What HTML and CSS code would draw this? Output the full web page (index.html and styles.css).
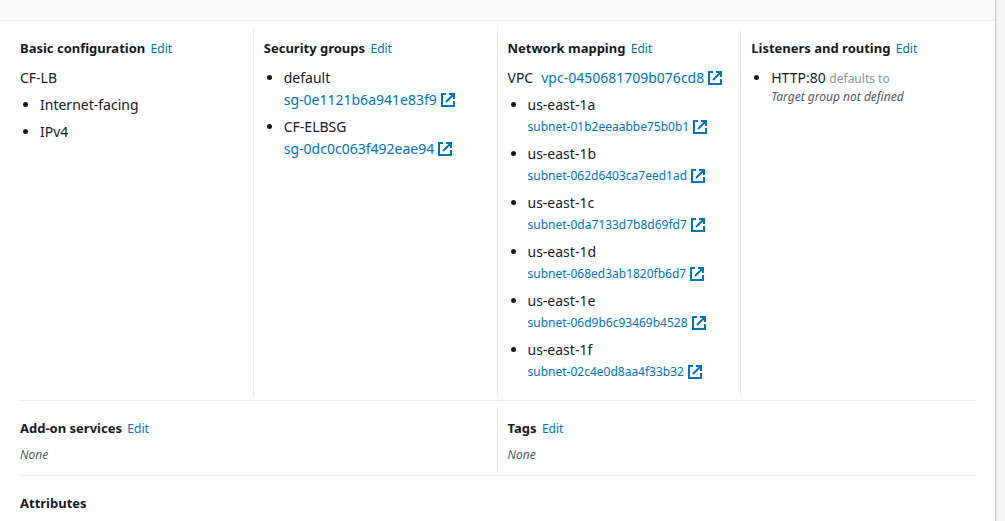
FILE: index.html
```html
<!DOCTYPE html>
<html lang="en">
<head>
<meta charset="utf-8">
<title>Load balancer summary</title>
<link rel="stylesheet" href="styles.css">
</head>
<body>
<svg class="sprite" aria-hidden="true">
  <symbol id="external" viewBox="0 0 16 16">
    <path d="M9 2h5v5M6 10l8-8M14 9v5H2V2h4" fill="none" stroke="currentColor" stroke-width="2"/>
  </symbol>
</svg>
<main class="panel">
  <div class="panel-header"></div>
  <div class="panel-body">
    <div class="row row-four">
      <section class="cell">
        <h2 class="title">Basic configuration <a class="edit" href="#basic">Edit</a></h2>
        <div>CF-LB</div>
        <ul class="list list-spaced">
          <li>Internet-facing</li>
          <li>IPv4</li>
        </ul>
      </section>
      <section class="cell">
        <h2 class="title">Security groups <a class="edit" href="#security">Edit</a></h2>
        <ul class="list">
          <li>default<a class="link" href="#sg1">sg-0e1121b6a941e83f9<svg class="icon"><use href="#external"/></svg></a></li>
          <li>CF-ELBSG<a class="link" href="#sg2">sg-0dc0c063f492eae94<svg class="icon"><use href="#external"/></svg></a></li>
        </ul>
      </section>
      <section class="cell">
        <h2 class="title">Network mapping <a class="edit" href="#network">Edit</a></h2>
        <div class="vpc"><span>VPC</span><a class="link" href="#vpc">vpc-0450681709b076cd8<svg class="icon"><use href="#external"/></svg></a></div>
        <ul class="list list-spaced">
          <li>us-east-1a<a class="link link-small" href="#a">subnet-01b2eeaabbe75b0b1<svg class="icon"><use href="#external"/></svg></a></li>
          <li>us-east-1b<a class="link link-small" href="#b">subnet-062d6403ca7eed1ad<svg class="icon"><use href="#external"/></svg></a></li>
          <li>us-east-1c<a class="link link-small" href="#c">subnet-0da7133d7b8d69fd7<svg class="icon"><use href="#external"/></svg></a></li>
          <li>us-east-1d<a class="link link-small" href="#d">subnet-068ed3ab1820fb6d7<svg class="icon"><use href="#external"/></svg></a></li>
          <li>us-east-1e<a class="link link-small" href="#e">subnet-06d9b6c93469b4528<svg class="icon"><use href="#external"/></svg></a></li>
          <li>us-east-1f<a class="link link-small" href="#f">subnet-02c4e0d8aa4f33b32<svg class="icon"><use href="#external"/></svg></a></li>
        </ul>
      </section>
      <section class="cell">
        <h2 class="title">Listeners and routing <a class="edit" href="#listeners">Edit</a></h2>
        <ul class="list">
          <li>HTTP:80 <span class="muted">defaults to</span><div class="note">Target group not defined</div></li>
        </ul>
      </section>
    </div>
    <div class="row row-two">
      <section class="cell">
        <h2 class="title">Add-on services <a class="edit" href="#addons">Edit</a></h2>
        <div class="note">None</div>
      </section>
      <section class="cell">
        <h2 class="title">Tags <a class="edit" href="#tags">Edit</a></h2>
        <div class="note">None</div>
      </section>
    </div>
    <div class="row">
      <section class="cell">
        <h2 class="title">Attributes</h2>
      </section>
    </div>
  </div>
</main>
</body>
</html>
```
FILE: styles.css
```css
body {
  margin: 0;
  padding-right: 9px;
  background: #f2f3f3;
  color: #16191f;
  font: 14px/22px "Noto Sans", "Open Sans", sans-serif;
  overflow: hidden;
}

.sprite {
  position: absolute;
  width: 0;
  height: 0;
}

.panel {
  min-height: 100vh;
  box-sizing: border-box;
  background: #fff;
  border-right: 1px solid #c4cccc;
}

.panel-header {
  height: 20px;
  background: #fafafa;
  border-bottom: 1px solid #eaeded;
}

.panel-body {
  padding: 0 20px;
}

.row {
  display: grid;
  padding: 6px 0 2px;
  border-bottom: 1px solid #eaeded;
}

.row:last-child {
  border-bottom: 0;
}

/* Outer cells extend into the panel padding so that all columns are equal. */
.row > .cell:first-child {
  margin-left: -11px;
  border-left-color: transparent;
}

.row > .cell:last-child {
  margin-right: -10px;
}

.row-four {
  grid-template-columns: minmax(0, calc(25% - 6px)) repeat(2, minmax(0, calc(25% + 5px))) minmax(0, 1fr);
}

.row-two {
  grid-template-columns: minmax(0, calc(50% - 1px)) minmax(0, 1fr);
}

.cell {
  padding: 10px;
  border-left: 1px solid #eaeded;
}

.title {
  margin: 0 0 8px;
  font-size: 13px;
  line-height: 22px;
  font-weight: 700;
}

.edit {
  margin-left: 2px;
  color: #0073bb;
  font-size: 12px;
  line-height: 1;
  font-weight: 400;
  text-decoration: none;
}

.list {
  margin: 0;
  padding-left: 20px;
}

.list-spaced {
  margin-top: 5px;
}

.list li {
  margin-bottom: 5px;
}

.link {
  display: flex;
  align-items: center;
  gap: 3px;
  color: #0073bb;
  text-decoration: none;
}

.link-small {
  font-size: 12px;
}

.icon {
  width: 16px;
  height: 16px;
  flex: none;
}

.vpc {
  display: flex;
  gap: 8px;
}

.muted {
  color: #879596;
  font-size: 12px;
  line-height: 1;
}

.note {
  color: #545b64;
  font-size: 12px;
  line-height: 16px;
  font-style: italic;
}
```
